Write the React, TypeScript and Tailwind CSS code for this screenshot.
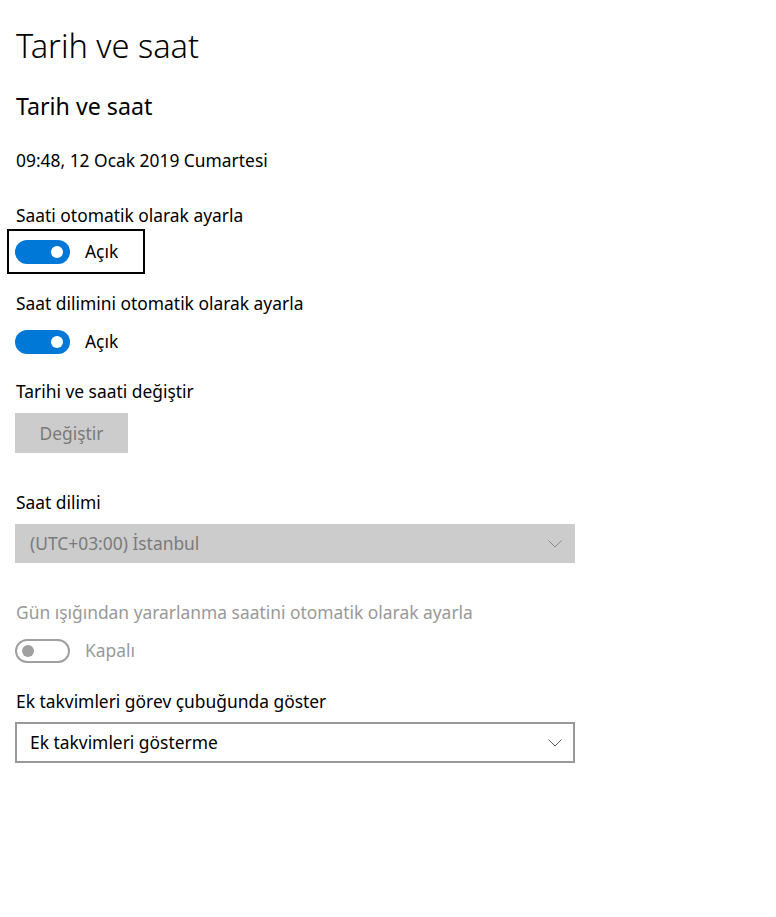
import React from "react";

function Chevron({ color }: { color: string }) {
  return (
    <svg width="14" height="8" viewBox="0 0 14 8" fill="none">
      <path d="M0.5 0.5 L7 7 L13.5 0.5" stroke={color} strokeWidth="1" />
    </svg>
  );
}

function ToggleOn() {
  return (
    <div className="w-[55px] h-[24px] rounded-full bg-[#0078d7] flex items-center justify-end pr-[7px] shrink-0">
      <div className="w-[12px] h-[12px] rounded-full bg-white" />
    </div>
  );
}

function ToggleOffDisabled() {
  return (
    <div className="w-[55px] h-[24px] rounded-full border-2 border-[#a0a0a0] flex items-center pl-[5px] shrink-0">
      <div className="w-[12px] h-[12px] rounded-full bg-[#a0a0a0]" />
    </div>
  );
}

export default function App() {
  return (
    <div
      className="w-[776px] h-[917px] bg-white text-black px-[15px] pt-[26px]"
      style={{ fontFamily: '"Noto Sans", "Open Sans", sans-serif' }}
    >
      <div className="pl-[1px] h-[40px] leading-[40px] text-[32.5px] font-light">Tarih ve saat</div>
      <div className="pl-[1px] mt-[25px] h-[30px] leading-[30px] text-[23.2px]">Tarih ve saat</div>
      <div className="pl-[1px] mt-[27px] h-[24px] leading-[24px] text-[17.4px]">09:48, 12 Ocak 2019 Cumartesi</div>

      <div className="pl-[1px] mt-[31px] h-[24px] leading-[24px] text-[17.4px]">Saati otomatik olarak ayarla</div>
      <div className="mt-[2px] -ml-[8px] w-[138px] h-[45px] border-2 border-black flex items-center pl-[6px] gap-[15px]">
        <ToggleOn />
        <span className="text-[17.4px]">Açık</span>
      </div>

      <div className="pl-[1px] mt-[17px] h-[24px] leading-[24px] text-[17.4px]">Saat dilimini otomatik olarak ayarla</div>
      <div className="mt-[4px] h-[45px] flex items-center gap-[15px]">
        <ToggleOn />
        <span className="text-[17.4px]">Açık</span>
      </div>

      <div className="pl-[1px] mt-[15px] h-[24px] leading-[24px] text-[17.4px]">Tarihi ve saati değiştir</div>
      <div className="mt-[10px] w-[113px] h-[40px] bg-[#cccccc] flex items-center justify-center text-[17.4px] text-[#7a7a7a]">
        Değiştir
      </div>

      <div className="pl-[1px] mt-[37px] h-[24px] leading-[24px] text-[17.4px]">Saat dilimi</div>
      <div className="mt-[10px] w-[560px] h-[39px] bg-[#cccccc] flex items-center justify-between pl-[15px] pr-[13px] text-[17.4px] text-[#7a7a7a]">
        <span>(UTC+03:00) İstanbul</span>
        <Chevron color="#8a8a8a" />
      </div>

      <div className="pl-[1px] mt-[37px] h-[24px] leading-[24px] text-[17.4px] text-[#999999]">
        Gün ışığından yararlanma saatini otomatik olarak ayarla
      </div>
      <div className="mt-[4px] h-[45px] flex items-center gap-[15px]">
        <ToggleOffDisabled />
        <span className="text-[17.4px] text-[#999999]">Kapalı</span>
      </div>

      <div className="pl-[1px] mt-[16px] h-[24px] leading-[24px] text-[17.4px]">Ek takvimleri görev çubuğunda göster</div>
      <div className="mt-[9px] w-[560px] h-[41px] border-2 border-[#999999] flex items-center justify-between pl-[13px] pr-[11px] text-[17.4px]">
        <span>Ek takvimleri gösterme</span>
        <Chevron color="#555555" />
      </div>
    </div>
  );
}
